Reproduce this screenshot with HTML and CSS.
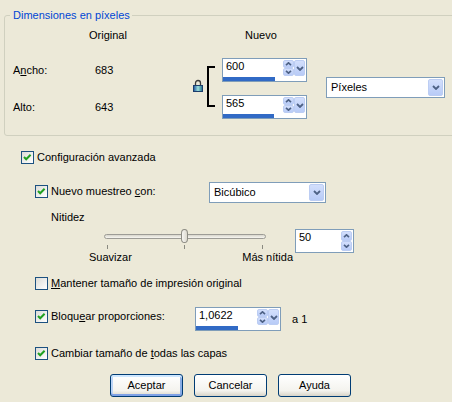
FILE: index.html
```html
<!DOCTYPE html>
<html lang="es">
<head>
<meta charset="utf-8">
<title>Cambiar tamaño</title>
<link rel="stylesheet" href="styles.css">
</head>
<body>
<div class="group">
  <div class="legend">Dimensiones en píxeles</div>
  <div class="dims">
    <div class="h-orig">Original</div>
    <div class="h-new">Nuevo</div>
    <div class="lbl r1">A<u>n</u>cho:</div>
    <div class="val r1">683</div>
    <div class="lbl r2">Alto:</div>
    <div class="val r2">643</div>
    <div class="lock">
      <svg width="10" height="13" viewBox="0 0 10 13">
        <defs>
          <linearGradient id="lg" x1="0" x2="1" y1="0" y2="0">
            <stop offset="0" stop-color="#1c4f9c"/>
            <stop offset="0.5" stop-color="#9be0dc"/>
            <stop offset="1" stop-color="#1d6a86"/>
          </linearGradient>
        </defs>
        <path d="M2.5 6.5V4a2.5 2.5 0 0 1 5 0v2.5" fill="none" stroke="#3a3a3a" stroke-width="1.3"/>
        <rect x="0.5" y="6.5" width="9" height="6" fill="url(#lg)" stroke="#1b3d6b"/>
      </svg>
    </div>
    <div class="bracket"></div>
    <div class="spin r1">
      <div class="spin-top">
        <span class="spin-txt">600</span>
        <span class="updown">
          <span class="ud"><svg width="7" height="4" viewBox="0 0 7 4"><polyline points="1,3.2 3.5,0.8 6,3.2" fill="none" stroke="#4d6185" stroke-width="1.6"/></svg></span>
          <span class="ud"><svg width="7" height="4" viewBox="0 0 7 4"><polyline points="1,0.8 3.5,3.2 6,0.8" fill="none" stroke="#4d6185" stroke-width="1.6"/></svg></span>
        </span>
        <span class="dd"><svg width="8" height="5" viewBox="0 0 8 5"><polyline points="1,1 4,4 7,1" fill="none" stroke="#4d6185" stroke-width="1.8"/></svg></span>
      </div>
      <div class="bar" style="width:52px"></div>
    </div>
    <div class="spin r2">
      <div class="spin-top">
        <span class="spin-txt">565</span>
        <span class="updown">
          <span class="ud"><svg width="7" height="4" viewBox="0 0 7 4"><polyline points="1,3.2 3.5,0.8 6,3.2" fill="none" stroke="#4d6185" stroke-width="1.6"/></svg></span>
          <span class="ud"><svg width="7" height="4" viewBox="0 0 7 4"><polyline points="1,0.8 3.5,3.2 6,0.8" fill="none" stroke="#4d6185" stroke-width="1.6"/></svg></span>
        </span>
        <span class="dd"><svg width="8" height="5" viewBox="0 0 8 5"><polyline points="1,1 4,4 7,1" fill="none" stroke="#4d6185" stroke-width="1.8"/></svg></span>
      </div>
      <div class="bar" style="width:51px"></div>
    </div>
    <div class="combo units">
      <span class="combo-txt">Píxeles</span>
      <span class="combo-btn"><svg width="8" height="5" viewBox="0 0 8 5"><polyline points="1,1 4,4 7,1" fill="none" stroke="#4d6185" stroke-width="1.8"/></svg></span>
    </div>
  </div>
</div>

<div class="check-row adv">
  <span class="cb"><svg width="11" height="11" viewBox="0 0 11 11"><polyline points="2,5 4.2,7.3 8.6,2.8" fill="none" stroke="#21a121" stroke-width="2"/></svg></span>
  <span class="cb-text">Configuración avanzada</span>
</div>

<div class="resample">
  <div class="check-row w174">
    <span class="cb"><svg width="11" height="11" viewBox="0 0 11 11"><polyline points="2,5 4.2,7.3 8.6,2.8" fill="none" stroke="#21a121" stroke-width="2"/></svg></span>
    <span class="cb-text">Nuevo muestreo <u>c</u>on:</span>
  </div>
  <div class="combo method">
    <span class="combo-txt">Bicúbico</span>
    <span class="combo-btn"><svg width="8" height="5" viewBox="0 0 8 5"><polyline points="1,1 4,4 7,1" fill="none" stroke="#4d6185" stroke-width="1.8"/></svg></span>
  </div>
</div>

<div class="nitidez">Nitidez</div>

<div class="sharp-row">
  <div class="slider">
    <div class="track"></div>
    <div class="thumb"></div>
    <div class="ticks"><i class="t1"></i><i class="t2"></i><i class="t3"></i></div>
    <div class="slider-labels"><span>Suavizar</span><span>Más nítida</span></div>
  </div>
  <div class="numbox">
    <span class="num-txt">50</span>
    <span class="updown tall">
      <span class="ud"><svg width="7" height="4" viewBox="0 0 7 4"><polyline points="1,3.2 3.5,0.8 6,3.2" fill="none" stroke="#4d6185" stroke-width="1.6"/></svg></span>
      <span class="ud"><svg width="7" height="4" viewBox="0 0 7 4"><polyline points="1,0.8 3.5,3.2 6,0.8" fill="none" stroke="#4d6185" stroke-width="1.6"/></svg></span>
    </span>
  </div>
</div>

<div class="check-row sub keep">
  <span class="cb"></span>
  <span class="cb-text"><u>M</u>antener tamaño de impresión original</span>
</div>

<div class="ratio-row">
  <div class="check-row w160">
    <span class="cb"><svg width="11" height="11" viewBox="0 0 11 11"><polyline points="2,5 4.2,7.3 8.6,2.8" fill="none" stroke="#21a121" stroke-width="2"/></svg></span>
    <span class="cb-text">Bloqu<u>e</u>ar proporciones:</span>
  </div>
  <div class="spin">
    <div class="spin-top">
      <span class="spin-txt">1,0622</span>
      <span class="updown">
        <span class="ud"><svg width="7" height="4" viewBox="0 0 7 4"><polyline points="1,3.2 3.5,0.8 6,3.2" fill="none" stroke="#4d6185" stroke-width="1.6"/></svg></span>
        <span class="ud"><svg width="7" height="4" viewBox="0 0 7 4"><polyline points="1,0.8 3.5,3.2 6,0.8" fill="none" stroke="#4d6185" stroke-width="1.6"/></svg></span>
      </span>
      <span class="dd"><svg width="8" height="5" viewBox="0 0 8 5"><polyline points="1,1 4,4 7,1" fill="none" stroke="#4d6185" stroke-width="1.8"/></svg></span>
    </div>
    <div class="bar" style="width:42px"></div>
  </div>
  <span class="a1">a 1</span>
</div>

<div class="check-row sub layers">
  <span class="cb"><svg width="11" height="11" viewBox="0 0 11 11"><polyline points="2,5 4.2,7.3 8.6,2.8" fill="none" stroke="#21a121" stroke-width="2"/></svg></span>
  <span class="cb-text">Cambiar tamaño de <u>t</u>odas las capas</span>
</div>

<div class="buttons">
  <div class="btn default">Aceptar</div>
  <div class="btn">Cancelar</div>
  <div class="btn">Ayuda</div>
</div>
</body>
</html>
```

FILE: styles.css
```css
* { box-sizing: border-box; }
html, body { margin: 0; padding: 0; }
body {
  width: 452px;
  height: 402px;
  overflow: hidden;
  background: #ece9d8;
  font-family: "Liberation Sans", Arial, sans-serif;
  font-size: 11px;
  line-height: 13px;
  color: #000;
}
u { text-decoration: underline; text-underline-offset: 1px; }

/* group box */
.group {
  position: relative;
  margin: 15px 0 0 4px;
  width: 470px;
  height: 121px;
  border: 1px solid #d0d0bf;
  border-radius: 3px;
  padding: 13px 0 0 8px;
}
.legend {
  position: absolute;
  left: 5px;
  top: -7px;
  padding: 0 2px 0 3px;
  background: #ece9d8;
  color: #0046d5;
  line-height: 13px;
}
.dims {
  display: grid;
  grid-template-columns: 82px 98px 13px 16px 85px 19px 119px;
  grid-template-rows: 13px 16px 24px 13px 24px;
}
.h-orig { grid-column: 2; grid-row: 1; margin-left: -6px; }
.h-new { grid-column: 5; grid-row: 1; margin-left: 23px; }
.lbl { grid-column: 1; align-self: center; }
.val { grid-column: 2; align-self: center; }
.r1 { grid-row: 3; }
.r2 { grid-row: 5; }
.lock { grid-column: 3; grid-row: 3 / 6; align-self: start; margin-top: 21px; height: 13px; }
.lock svg { display: block; }
.bracket {
  grid-column: 4; grid-row: 3 / 6;
  align-self: start;
  margin: 8px 0 0 1px;
  width: 8px; height: 41px;
  border: 2px solid #000; border-right: 0;
}
.dims .spin { grid-column: 5; }
.units { grid-column: 7; grid-row: 3 / 6; align-self: start; margin-top: 19px; }

/* spin field with bar */
.spin {
  width: 85px;
  height: 24px;
  border: 1px solid #7f9db9;
  background: #fff;
  display: flex;
  flex-direction: column;
  padding-right: 1px;
}
.spin-top { display: flex; height: 17px; }
.spin-txt { flex: 1; padding-left: 3px; line-height: 15px; }
.updown {
  width: 11px; height: 16px; margin-top: 1px;
  display: flex; flex-direction: column;
}
.ud {
  flex: 1;
  display: flex; align-items: center; justify-content: center;
  background: linear-gradient(#d3dffc, #b8cbf7);
  border: 1px solid #bccdf3;
  border-radius: 2px;
}
.ud svg, .dd svg, .combo-btn svg { display: block; }
.dd {
  width: 11px; height: 16px; margin-top: 1px;
  display: flex; align-items: center; justify-content: center;
  background: linear-gradient(#d3dffc, #b8cbf7);
  border: 1px solid #bccdf3;
  border-radius: 2px;
}
.bar { height: 4px; margin-top: 1px; background: #316ac5; }

/* combo */
.combo {
  display: flex;
  height: 21px;
  border: 1px solid #7f9db9;
  background: #fff;
  padding: 1px;
}
.units { width: 119px; }
.method { width: 117px; }
.combo-txt { flex: 1; padding-left: 3px; line-height: 17px; }
.combo-btn {
  width: 15px; height: 17px;
  display: flex; align-items: center; justify-content: center;
  background: linear-gradient(#d3dffc, #b8cbf7);
  border: 1px solid #bccdf3;
  border-radius: 2px;
}

/* checkboxes */
.check-row { display: flex; align-items: center; height: 13px; }
.cb {
  width: 13px; height: 13px;
  border: 1px solid #1c5180;
  background: linear-gradient(135deg, #dcdcd7, #ffffff);
  display: flex; align-items: center; justify-content: center;
}
.cb svg { display: block; }
.cb-text { padding-left: 3px; white-space: nowrap; }
.adv { margin: 15px 0 0 21px; }
.sub { margin-left: 35px; }

.resample { display: flex; align-items: flex-start; height: 21px; margin: 18px 0 0 35px; }
.resample .check-row { margin-top: 3px; }
.w174 { width: 174px; }
.w160 { width: 160px; }

.nitidez { margin: 8px 0 0 51px; }

/* slider row */
.sharp-row { display: flex; align-items: flex-start; margin: 5px 0 0 89px; }
.slider { position: relative; width: 204px; }
.track {
  margin: 5px 0 0 15px;
  width: 162px; height: 5px;
  border: 1px solid #9d9c96;
  border-radius: 3px;
  background: linear-gradient(#d8d6cc, #f7f6f1);
}
.thumb {
  position: absolute;
  left: 92px; top: 0;
  width: 7px; height: 14px;
  border: 1px solid #8d8c84;
  border-radius: 4px / 5px;
  background: linear-gradient(90deg, #f7f6f2, #dcd9cf);
}
.ticks { position: relative; height: 4px; margin-top: 6px; }
.ticks i { position: absolute; top: 0; width: 1px; height: 4px; background: #8a8a80; }
.ticks .t1 { left: 18px; }
.ticks .t2 { left: 95px; }
.ticks .t3 { left: 173px; }
.slider-labels { display: flex; justify-content: space-between; margin-top: 2px; }

.numbox {
  margin-left: 2px;
  width: 59px; height: 24px;
  border: 1px solid #7f9db9;
  background: #fff;
  display: flex;
  padding: 0 1px 1px 0;
}
.num-txt { flex: 1; padding-left: 3px; line-height: 15px; }
.updown.tall { height: 20px; margin-top: 1px; }

.keep { margin-top: 13px; }

.ratio-row { display: flex; align-items: flex-start; height: 24px; margin: 17px 0 0 35px; }
.ratio-row .check-row { margin-top: 3px; }
.ratio-row .spin { width: 86px; }
.a1 { margin: 6px 0 0 11px; }

.layers { margin-top: 16px; }

/* buttons */
.buttons { display: flex; gap: 11px; margin: 14px 0 0 110px; }
.btn {
  width: 73px; height: 23px;
  border: 1px solid #003c74;
  border-radius: 3px;
  background: linear-gradient(#ffffff, #f4f3ee 75%, #d8d4c8);
  display: flex; align-items: center; justify-content: center;
}
.btn.default {
  box-shadow: inset 0 2px 0 #cee7ff, inset 0 -2px 0 #7fa1e6, inset 2px 0 0 #bcd4f6, inset -2px 0 0 #89ade4;
}
```
